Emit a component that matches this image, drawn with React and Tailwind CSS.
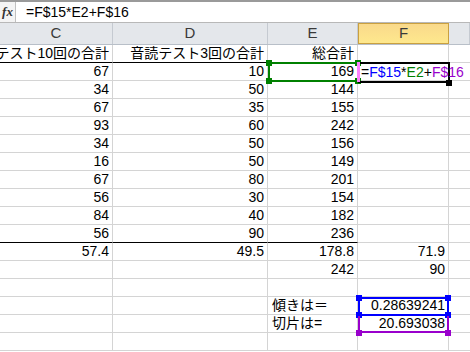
import React from 'react';

const font = { fontFamily: '"Liberation Sans", "Noto Sans CJK JP", sans-serif' };

// C, D, E, F
const rows = [
  ['小テスト10回の合計', '音読テスト3回の合計', '総合計', ''],
  ['67', '10', '169', ''],
  ['34', '50', '144', ''],
  ['67', '35', '155', ''],
  ['93', '60', '242', ''],
  ['34', '50', '156', ''],
  ['16', '50', '149', ''],
  ['67', '80', '201', ''],
  ['56', '30', '154', ''],
  ['84', '40', '182', ''],
  ['56', '90', '236', ''],
  ['57.4', '49.5', '178.8', '71.9'],
  ['', '', '242', '90'],
  ['', '', '', ''],
  ['', '', '傾きは＝', '0.28639241'],
  ['', '', '切片は=', '20.693038'],
  ['', '', '', ''],
];

const widths = ['w-[113px]', 'w-[155px]', 'w-[90px]', 'w-[91px]', 'flex-1'];

function Formula() {
  return (
    <span className="whitespace-nowrap">
      =<span className="text-[#0000ff]">F$15</span>*<span className="text-[#008000]">E2</span>+<span className="text-[#9900cc]">F$16</span>
    </span>
  );
}

function Cell({ children, w, black, left, last }) {
  return (
    <div
      className={`${w} h-[18px] shrink-0 flex items-center whitespace-nowrap text-[14px] leading-[17px] text-black ${left ? 'justify-start pl-[4px]' : 'justify-end pr-[3px]'} ${last ? '' : 'border-r border-[#d4d4d4]'} border-b ${black ? 'border-b-black' : 'border-b-[#d4d4d4]'}`}
    >
      {children}
    </div>
  );
}

function Handle({ className }) {
  return <div className={`absolute w-[6px] h-[6px] ${className}`} />;
}

export default function App() {
  return (
    <div className="relative w-[470px] h-[352px] overflow-hidden bg-white" style={font}>
      {/* formula bar */}
      <div className="h-[23px] flex border-t-2 border-b border-[#9a9a9a] border-b-[#b8b8b8]">
        <div className="w-[16px] flex items-center justify-center bg-[#f4f4f4] border-r border-[#c0c0c0]">
          <span className="italic font-bold text-[13px] text-[#333]" style={{ fontFamily: '"Liberation Serif", serif' }}>fx</span>
        </div>
        <div className="flex-1 flex items-center pl-[10px] text-[14px] text-black">
          <span className="whitespace-nowrap">=F$15*E2+F$16</span>
        </div>
      </div>

      {/* column headers */}
      <div className="h-[22px] flex border-b border-[#b8bfc8] bg-[#e4e7eb]">
        {['C', 'D', 'E', 'F', ''].map((c, i) => (
          <div
            key={i}
            className={`${widths[i]} shrink-0 flex items-center justify-center text-[15px] text-[#3a3a3a] ${c === 'F' ? 'bg-gradient-to-b from-[#f9d98b] to-[#fee88d] border border-[#c9a040]' : 'border-r border-[#c5cad1]'}`}
          >
            {c}
          </div>
        ))}
      </div>

      {/* body */}
      <div className="flex flex-col">
        {rows.map((r, ri) => {
          const black = ri === 0 || ri === 10;
          return (
            <div key={ri} className="flex">
              <Cell w={widths[0]} black={black}>{r[0]}</Cell>
              <Cell w={widths[1]} black={black}>{r[1]}</Cell>
              <Cell w={widths[2]} black={black} left={ri === 14 || ri === 15}>{r[2]}</Cell>
              <Cell w={widths[3]}>{r[3]}</Cell>
              <Cell w={widths[4]} last />
            </div>
          );
        })}
      </div>

      {/* E2 reference (green) */}
      <div className="absolute left-[268px] top-[62px] w-[91px] h-[20px] border-2 border-[#008000]" />
      <Handle className="left-[266px] top-[60px] bg-[#008000]" />
      <Handle className="left-[266px] top-[78px] bg-[#008000]" />
      <Handle className="left-[355px] top-[60px] bg-[#008000]" />
      <Handle className="left-[355px] top-[78px] bg-[#008000]" />

      {/* F2 active cell */}
      <div className="absolute left-[358px] top-[62px] w-[92px] h-[21px] border-2 border-black" />
      <div className="absolute left-[357px] top-[62px] w-[3px] h-[20px] bg-[#ff80ff]" />
      <Handle className="left-[446px] top-[80px] w-[5px] h-[5px] bg-black" />
      <div className="absolute left-[361px] top-[64px] h-[17px] flex items-center text-[14px] leading-[17px] text-black">
        <Formula />
      </div>

      {/* F15 reference (blue) */}
      <div className="absolute left-[358px] top-[297px] w-[91px] h-[19px] border-2 border-[#0000ff]" />
      <Handle className="left-[356px] top-[295px] bg-[#0000ff]" />
      <Handle className="left-[445px] top-[295px] bg-[#0000ff]" />
      <Handle className="left-[356px] top-[312px] bg-[#0000ff]" />
      <Handle className="left-[445px] top-[312px] bg-[#0000ff]" />

      {/* F16 reference (purple) */}
      <div className="absolute left-[358px] top-[316px] w-[91px] h-[17px] border-2 border-t-0 border-[#9900cc]" />
      <Handle className="left-[356px] top-[330px] bg-[#9900cc]" />
      <Handle className="left-[445px] top-[330px] bg-[#9900cc]" />
    </div>
  );
}
